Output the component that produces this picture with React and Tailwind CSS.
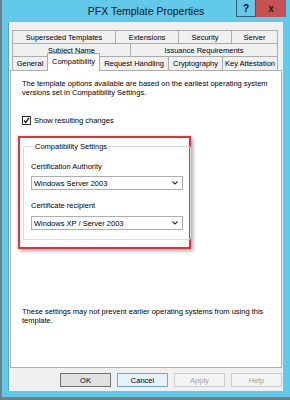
import React from "react";

const rowOne = [
  { label: "Superseded Templates", w: "w-[103px]" },
  { label: "Extensions", w: "w-[63px]" },
  { label: "Security", w: "w-[53px]" },
  { label: "Server", w: "w-[47px]" },
];

const rowTwo = [
  { label: "Subject Name", w: "w-[118px]" },
  { label: "Issuance Requirements", w: "w-[148px]" },
];

function Tab({ label, w, noLeft }) {
  return (
    <div
      className={`${w} h-full flex items-center justify-center border-t border-[#acacac] bg-[#f0f0f0] last:border-r ${
        noLeft ? "" : "border-l"
      }`}
    >
      {label}
    </div>
  );
}

function Select({ value }) {
  return (
    <div className="w-[152px] h-[14px] flex items-center justify-between border border-[#abadb3] bg-white pl-[2px] pr-[4px]">
      <span>{value}</span>
      <svg width="6" height="4" viewBox="0 0 6 4">
        <polyline points="0.5,0.5 3,3 5.5,0.5" fill="none" stroke="#333" strokeWidth="1.1" />
      </svg>
    </div>
  );
}

function Button({ label, kind }) {
  const styles = {
    ok: "border-[#707070] bg-[#e1e1e1] text-black",
    cancel: "border-[#6fa6d3] bg-[#e5f1fb] text-black",
    off: "border-[#cccccc] bg-[#f4f4f4] text-[#a3a3a3]",
  };
  return (
    <div className={`w-[51px] h-[14px] flex items-center justify-center border ${styles[kind]}`}>
      {label}
    </div>
  );
}

export default function App() {
  return (
    <div className="w-[290px] h-[400px] bg-[#7d7a80] overflow-hidden font-['Liberation_Sans',Arial,sans-serif] text-[7.5px] leading-[9px] text-black">
      <div className="ml-[2px] w-[288px] h-[397px] bg-[#62c9eb] flex flex-col">
        {/* Title bar */}
        <div className="h-[22px] grid grid-cols-[1fr_auto_1fr]">
          <div />
          <div className="pt-[5px] text-[10.5px] leading-[12px] text-[#111]">PFX Template Properties</div>
          <div className="flex justify-end items-start pr-[4px]">
            <div className="w-[20px] h-[17px] flex items-center justify-center border border-[#2f5f73] border-t-0 text-[10px] font-bold">
              ?
            </div>
            <div className="w-[30px] h-[17px] flex items-center justify-center bg-[#c75050] text-[10px] font-bold text-[#1a1a1a]">
              x
            </div>
          </div>
        </div>

        {/* Dialog body */}
        <div className="ml-[6px] w-[275px] h-[369px] bg-[#f0f0f0] border-l border-[#4aa7c6] pt-[8px]">
          <div className="ml-[3px] w-[266px] flex flex-col">
            <div className="h-[13px] flex">
              {rowOne.map((t) => (
                <Tab key={t.label} {...t} />
              ))}
            </div>
            <div className="h-[13px] flex">
              {rowTwo.map((t) => (
                <Tab key={t.label} {...t} />
              ))}
            </div>
            <div className="h-[14px] flex items-end">
              <Tab label="General" w="w-[35px]" />
              <div className="w-[53px] h-[18px] -mb-px relative z-10 flex justify-center pt-[3px] bg-white border-l border-t border-r border-[#acacac]">
                Compatibility
              </div>
              <Tab label="Request Handling" w="w-[68px]" noLeft />
              <Tab label="Cryptography" w="w-[54px]" />
              <Tab label="Key Attestation" w="w-[56px]" />
            </div>
          </div>

          {/* Tab page */}
          <div className="ml-[1px] w-[272px] h-[298px] bg-white border border-[#adadad] flex flex-col">
            <p className="ml-[11px] mt-[8px] w-[250px]">
              The template options available are based on the earliest operating system versions set in Compatibility
              Settings.
            </p>

            <div className="ml-[11px] mt-[19px] flex items-center gap-[3px]">
              <div className="w-[9px] h-[9px] border border-[#333] bg-white flex items-center justify-center">
                <svg width="7" height="7" viewBox="0 0 7 7">
                  <polyline points="1,3.5 2.8,5.5 6,1" fill="none" stroke="#222" strokeWidth="1.3" />
                </svg>
              </div>
              <span>Show resulting changes</span>
            </div>

            <div className="ml-[7px] mt-[11px] w-[173px] h-[113px] border-2 border-[#e5303a] shadow-[2px_2px_4px_rgba(0,0,0,0.35)] px-[3px] pt-[4px]">
              <fieldset className="w-[165px] h-[98px] border border-[#dcdcdc] rounded-[2px] px-[7px]">
                <legend className="ml-[3px] px-[1px]">Compatibility Settings</legend>
                <div className="mt-[11px]">Certification Authority</div>
                <div className="mt-[5px]">
                  <Select value="Windows Server 2003" />
                </div>
                <div className="mt-[11px]">Certificate recipient</div>
                <div className="mt-[6px]">
                  <Select value="Windows XP / Server 2003" />
                </div>
              </fieldset>
            </div>

            <p className="ml-[11px] mt-[58px] w-[250px]">
              These settings may not prevent earlier operating systems from using this template.
            </p>
          </div>

          {/* Buttons */}
          <div className="mt-[5px] pr-[1px] flex justify-end gap-[6px]">
            <Button label="OK" kind="ok" />
            <Button label="Cancel" kind="cancel" />
            <Button label="Apply" kind="off" />
            <Button label="Help" kind="off" />
          </div>
        </div>
      </div>
    </div>
  );
}
